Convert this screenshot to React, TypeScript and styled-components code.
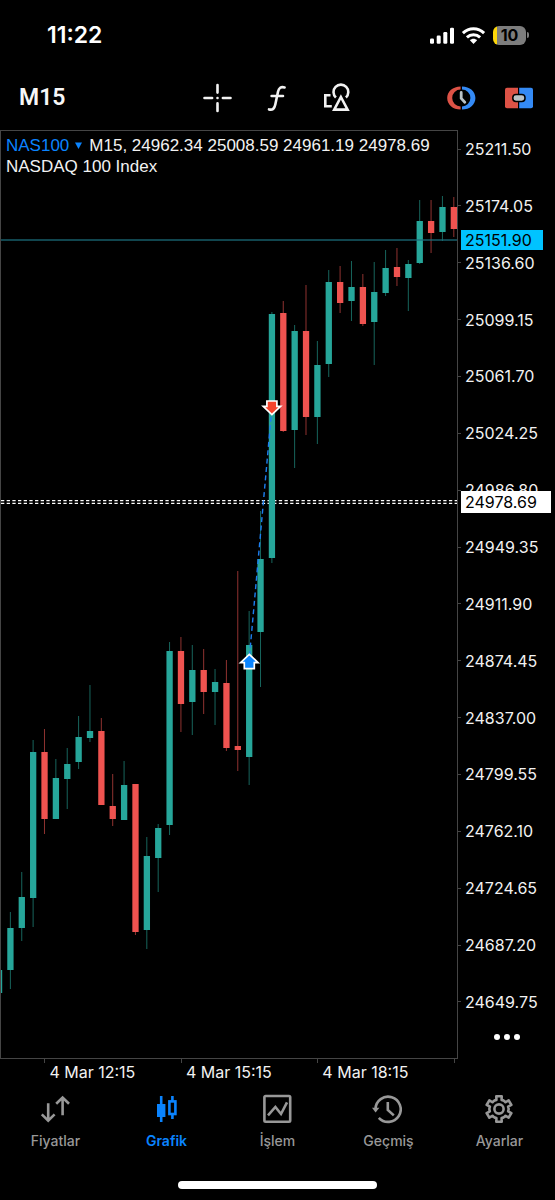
import React from "react";
import styled, { createGlobalStyle } from "styled-components";

const GlobalStyle = createGlobalStyle`
  *, *::before, *::after { box-sizing: border-box; }
  body { margin: 0; background: #000; color: #f2f2f2; font-family: Inter, "Liberation Sans", sans-serif; }
  button { padding: 0; border: 0; background: none; color: inherit; font: inherit; cursor: pointer; }
  svg { display: block; overflow: visible; }
`;

const UP = "#26a69a";
const DOWN = "#ef5350";
const FRAME = "#454545";

const Screen = styled.div`
  display: flex;
  flex-direction: column;
  min-height: 100vh;
  background: #000;
`;

const StatusBar = styled.header`
  display: flex;
  align-items: center;
  justify-content: space-between;
  height: 70px;
  padding: 0 26px 0 47px;
`;

const Clock = styled.time`
  font-size: 23px;
  line-height: 28px;
  font-weight: 600;
  color: #fff;
`;

const StatusIcons = styled.div`
  display: flex;
  align-items: center;
  gap: 8px;
`;

const Battery = styled.div`
  display: flex;
  align-items: center;
  gap: 1px;
  &::after {
    content: "";
    width: 2px;
    height: 6px;
    border-radius: 0 2px 2px 0;
    background: #7d7d7d;
  }
`;

const BatteryBody = styled.span`
  width: 33px;
  height: 19px;
  border-radius: 6px;
  background: linear-gradient(90deg, #fdd70a 4px, #7d7d7d 4px);
  color: #000;
  font-size: 16px;
  line-height: 19px;
  font-weight: 700;
  text-align: center;
`;

const Toolbar = styled.div`
  display: flex;
  align-items: center;
  height: 60px;
  padding: 0 21px 4px 19px;
`;

const ToolGroup = styled.div<{ $side?: "start" | "end" }>`
  display: flex;
  align-items: center;
  gap: ${(p) => (p.$side === "end" ? 28 : 30)}px;
  flex: ${(p) => (p.$side ? "1 1 0" : "none")};
  justify-content: ${(p) => (p.$side === "end" ? "flex-end" : "flex-start")};
`;

const Timeframe = styled.button`
  font-family: Roboto, sans-serif;
  font-size: 23px;
  line-height: 28px;
  font-weight: 600;
  color: #f7f7f7;
`;

const IconButton = styled.button`
  width: 30px;
  height: 30px;
`;

const ChartArea = styled.main`
  display: grid;
  grid-template-columns: minmax(0, 1fr) 97px;
`;

const Plot = styled.section`
  position: relative;
  border: 1px solid ${FRAME};
  & > svg {
    width: 100%;
    height: auto;
  }
`;

const Legend = styled.div`
  position: absolute;
  top: 4px;
  left: 5px;
  font-family: "Liberation Sans", Arial, sans-serif;
  font-size: 17px;
  line-height: 21px;
  white-space: nowrap;
`;

const LegendLine = styled.p`
  display: flex;
  align-items: center;
  gap: 7px;
  margin: 0;
`;

const SymbolButton = styled.button`
  display: flex;
  align-items: center;
  gap: 6px;
  color: #0a84ff;
`;

const PriceAxis = styled.aside`
  position: relative;
  display: flex;
  flex-direction: column;
  padding-top: 7px;
  font-size: 16px;
  line-height: 24px;
`;

const PriceScale = styled.ol`
  flex: 1;
  display: flex;
  flex-direction: column;
  justify-content: space-between;
  margin: 0;
  padding: 0;
  list-style: none;
`;

const PriceTick = styled.li`
  display: flex;
  align-items: center;
  gap: 4px;
  &::before {
    content: "";
    width: 3px;
    height: 1px;
    background: ${FRAME};
  }
`;

const PriceTag = styled.output<{ $tone: "ask" | "last" }>`
  position: absolute;
  left: 3px;
  transform: translateY(-50%);
  min-width: ${(p) => (p.$tone === "ask" ? 82 : 90)}px;
  padding: 0 4px;
  line-height: ${(p) => (p.$tone === "ask" ? 20 : 22)}px;
  background: ${(p) => (p.$tone === "ask" ? "#00c3ff" : "#fff")};
  color: #000;
`;

const MoreButton = styled.button`
  display: flex;
  align-items: center;
  justify-content: center;
  align-self: center;
  gap: 4px;
  width: 48px;
  height: 45px;
`;

const Dot = styled.span`
  width: 6px;
  height: 6px;
  border-radius: 50%;
  background: #fff;
`;

const TimeAxis = styled.ol`
  display: flex;
  width: calc(100% - 97px);
  height: 25px;
  margin: 0;
  padding: 0 0 0 8%;
  list-style: none;
  font-size: 16px;
  line-height: 18px;
`;

const TimeTick = styled.li`
  flex: 0 0 33%;
  white-space: nowrap;
  &::before {
    content: "";
    display: block;
    width: 1px;
    height: 4px;
    background: ${FRAME};
  }
  &:last-child { flex: 0 0 4px; }
`;

const TimeLabel = styled.span`
  display: block;
  padding-left: 5px;
`;

const TabBar = styled.nav`
  display: grid;
  grid-template-columns: repeat(5, 1fr);
  padding-top: 10px;
`;

const Tab = styled.a<{ $active?: boolean }>`
  display: flex;
  flex-direction: column;
  align-items: center;
  gap: 7px;
  color: ${(p) => (p.$active ? "#0a84ff" : "#989898")};
  font-size: 14px;
  line-height: 20px;
  font-weight: ${(p) => (p.$active ? 600 : 500)};
  text-decoration: none;
`;

const HomeIndicator = styled.div`
  width: 36%;
  height: 8px;
  margin: 30px auto 11px;
  border-radius: 4px;
  background: #fff;
`;

// [high, body top, body bottom, low, falling] for each quarter of an hour
type Candle = [number, number, number, number, boolean?];
const candles: Candle[] = [
  [970, 970, 993, 993],
  [912, 928, 970, 989],
  [872, 897, 928, 941],
  [740, 752, 898, 927],
  [729, 752, 819, 834, true],
  [759, 778, 819, 819],
  [748, 764, 779, 809],
  [716, 737, 762, 769],
  [685, 731, 738, 742],
  [718, 731, 805, 805, true],
  [774, 806, 819, 826, true],
  [761, 785, 820, 820],
  [784, 784, 932, 935, true],
  [837, 856, 930, 949],
  [824, 828, 858, 892],
  [642, 651, 825, 835],
  [637, 651, 704, 732, true],
  [645, 670, 702, 735],
  [649, 670, 692, 714, true],
  [669, 682, 692, 725],
  [660, 683, 748, 751, true],
  [571, 746, 750, 771, true],
  [611, 645, 757, 785],
  [511, 559, 632, 687],
  [312, 314, 558, 563],
  [301, 313, 431, 432, true],
  [325, 331, 430, 468],
  [285, 331, 417, 435, true],
  [341, 365, 417, 444],
  [270, 282, 364, 377],
  [266, 282, 303, 313, true],
  [261, 287, 301, 321],
  [274, 287, 324, 326, true],
  [262, 292, 322, 365],
  [250, 268, 293, 296],
  [248, 267, 277, 286, true],
  [260, 264, 278, 311],
  [200, 221, 263, 264],
  [200, 221, 233, 253, true],
  [196, 207, 232, 241],
  [197, 207, 229, 237, true],
];

const prices = [
  "25211.50", "25174.05", "25136.60", "25099.15", "25061.70", "25024.25", "24986.80", "24949.35",
  "24911.90", "24874.45", "24837.00", "24799.55", "24762.10", "24724.65", "24687.20", "24649.75",
];
const times = ["4 Mar 12:15", "4 Mar 15:15", "4 Mar 18:15"];

const STEP = 11.37;

function CandleChart() {
  return (
    <svg viewBox="1 131 456 927" role="img" aria-label="NAS100 M15" style={{ overflow: "hidden" }}>
      <g stroke="#fff" strokeWidth="1.4" strokeDasharray="3.3 2.37">
        <path d="M1 500.6H457" />
        <path d="M1 503.4H457" />
      </g>
      {candles.map(([high, top, bottom, low, falling], i) => {
        const x = -1 + i * STEP;
        const color = falling ? DOWN : UP;
        return (
          <g key={i} fill={color}>
            <rect x={x - 0.5} y={high} width="1" height={low - high} opacity="0.6" />
            <rect x={x - 3.1} y={top} width="6.3" height={bottom - top} />
          </g>
        );
      })}
      <path d="M1 240H457" stroke="#1b6f7c" strokeWidth="1.3" opacity="0.85" />
      <path d="M249.5 656L271.5 412" stroke="#1c7ff0" strokeWidth="1.4" strokeDasharray="5 3.4" />
      <g stroke="#fff" strokeWidth="1.7">
        <path d="M249.3 654.3L258 662.6H254.3V668.7H244.3V662.6H240.6Z" fill="#0a84ff" />
        <path d="M271.9 414.6L280.6 406.3H276.9V401H266.9V406.3H263.2Z" fill="#f5432c" />
      </g>
    </svg>
  );
}

const SignalIcon = () => (
  <svg width="24" height="17" viewBox="0 0 24 17" fill="#fff">
    <rect x="0" y="11.5" width="4" height="5.2" rx="1.2" />
    <rect x="6.7" y="8.6" width="4" height="8.1" rx="1.2" />
    <rect x="13.3" y="5" width="4" height="11.7" rx="1.2" />
    <rect x="20" y="0.7" width="4" height="16" rx="1.2" />
  </svg>
);

const WifiIcon = () => (
  <svg width="23" height="17" viewBox="0.5 0 23 17" fill="none" stroke="#fff" strokeWidth="3">
    <path d="M1.4 6.2C7.4 0.4 16.6 0.4 22.6 6.2" />
    <path d="M5.4 10.4C9.2 6.8 14.8 6.8 18.6 10.4" />
    <path d="M8.4 13.3C10.5 11.3 13.5 11.3 15.6 13.3L12 16.9Z" fill="#fff" stroke="none" />
  </svg>
);

const CrosshairIcon = () => (
  <svg width="30" height="30" viewBox="0 0 30 30" stroke="#f2f2f2" strokeWidth="2.6" strokeLinecap="round">
    <path d="M15.5 2V9.6M15.5 20.4V28M2.5 15H10.1M20.9 15H28.5M15.5 15V15.01" />
  </svg>
);

const FunctionIcon = () => (
  <svg width="30" height="30" viewBox="0 0 30 30" fill="none" stroke="#f2f2f2" strokeWidth="2.6" strokeLinecap="round">
    <path d="M22.6 4.4C18.9 3.4 16.8 5 16 8.8L13.3 21.6C12.5 25.6 10.6 27.4 7 26.4M9.6 13H21" />
  </svg>
);

const ShapesIcon = () => (
  <svg width="30" height="30" viewBox="0 0 30 30" fill="none" stroke="#f2f2f2" strokeWidth="2.6">
    <path d="M8.5 12.2H3.3V23.3H9.8" />
    <path d="M13.9 14.5A7.4 7.4 0 1 1 23.9 14.5" />
    <path d="M18.9 14L25.6 26.6H12.2Z" />
  </svg>
);

const TradeClockIcon = () => (
  <svg width="30" height="30" viewBox="0 0 30 30">
    <path d="M14.6 3.4C6.8 3.4 1.2 8.4 1.2 15S6.8 26.6 14.6 26.6V23.4A8.4 8.4 0 0 1 14.6 6.6Z" fill="#dd5246" />
    <path d="M16 3.4C23.8 3.4 29.4 8.4 29.4 15S23.8 26.6 16 26.6V23.4A8.4 8.4 0 0 0 16 6.6Z" fill="#348af5" />
    <path d="M15.2 9.4V15.4L18.8 19.2" fill="none" stroke="#b9c2c6" strokeWidth="2.8" strokeLinecap="round" strokeLinejoin="round" />
  </svg>
);

const OneClickIcon = () => (
  <svg width="30" height="30" viewBox="0 0 30 30">
    <path d="M14 4.8H3A2 2 0 0 0 1 6.8V23.2A2 2 0 0 0 3 25.2H14Z" fill="#dd5246" />
    <path d="M15.2 4.8H27A2 2 0 0 1 29 6.8V23.2A2 2 0 0 1 27 25.2H15.2Z" fill="#348af5" />
    <rect x="8.8" y="11.5" width="12.2" height="7" rx="3.2" fill="#b9c2c6" stroke="#000" strokeWidth="1.5" />
  </svg>
);

const gearOutline = Array.from({ length: 6 }, (_, tooth) =>
  [[-26, 9.6], [-16, 9.4], [-12, 13], [12, 13], [16, 9.4], [26, 9.6]].map(([offset, radius]) => {
    const angle = ((tooth * 60 - 90 + offset) * Math.PI) / 180;
    return `${(15 + radius * Math.cos(angle)).toFixed(2)},${(15 + radius * Math.sin(angle)).toFixed(2)}`;
  }).join(" ")
).join(" ");

const TabIcon = ({ children }: { children: React.ReactNode }) => (
  <svg width="30" height="30" viewBox="0 0 30 30" fill="none" stroke="currentColor" strokeWidth="2.6">
    {children}
  </svg>
);

const tabs = [
  {
    label: "Fiyatlar",
    icon: <path d="M7.2 9.3V26.6M0.8 20.4L7.2 26.6L13.6 20.4M21.6 21.3V3.6M15.2 9.8L21.6 3.6L28 9.8" />,
  },
  {
    label: "Grafik",
    icon: (
      <g>
        <rect x="5" y="10" width="8.4" height="13" fill="currentColor" stroke="none" />
        <path d="M9.2 2V28M20.4 2V7M20.4 20.5V25" />
        <rect x="17.4" y="7.4" width="6" height="12.6" />
      </g>
    ),
  },
  {
    label: "İşlem",
    icon: (
      <g>
        <rect x="1.4" y="2" width="25.8" height="25.8" rx="1.2" />
        <path d="M5 21.4L12.4 13L18 20L24 8.4" />
      </g>
    ),
  },
  {
    label: "Geçmiş",
    icon: (
      <g>
        <path d="M1.5 15A12.6 12.6 0 1 1 4.8 23.8" />
        <path d="M-2 13.8H5.4L1.6 18.4Z" fill="currentColor" stroke="none" />
        <path d="M13.8 8V16L19.8 21.4" />
      </g>
    ),
  },
  {
    label: "Ayarlar",
    icon: (
      <g transform="translate(-1 0)">
        <polygon points={gearOutline} strokeLinejoin="round" />
        <circle cx="15" cy="15" r="4.6" />
      </g>
    ),
  },
];

export default function App() {
  return (
    <Screen>
      <GlobalStyle />
      <StatusBar>
        <Clock>11:22</Clock>
        <StatusIcons>
          <SignalIcon />
          <WifiIcon />
          <Battery>
            <BatteryBody>10</BatteryBody>
          </Battery>
        </StatusIcons>
      </StatusBar>

      <Toolbar>
        <ToolGroup $side="start">
          <Timeframe>M15</Timeframe>
        </ToolGroup>
        <ToolGroup>
          <IconButton aria-label="Crosshair"><CrosshairIcon /></IconButton>
          <IconButton aria-label="Indicators"><FunctionIcon /></IconButton>
          <IconButton aria-label="Objects"><ShapesIcon /></IconButton>
        </ToolGroup>
        <ToolGroup $side="end">
          <IconButton aria-label="Order"><TradeClockIcon /></IconButton>
          <IconButton aria-label="One click trading"><OneClickIcon /></IconButton>
        </ToolGroup>
      </Toolbar>

      <ChartArea>
        <Plot>
          <CandleChart />
          <Legend>
            <LegendLine>
              <SymbolButton>
                NAS100
                <svg width="7" height="7" viewBox="0 0 7 7" fill="currentColor"><path d="M0 0.5H7L3.5 7Z" /></svg>
              </SymbolButton>
              <span>M15, 24962.34 25008.59 24961.19 24978.69</span>
            </LegendLine>
            <LegendLine>NASDAQ 100 Index</LegendLine>
          </Legend>
        </Plot>
        <PriceAxis>
          <PriceScale>
            {prices.map((price) => (
              <PriceTick key={price}>{price}</PriceTick>
            ))}
          </PriceScale>
          <PriceTag $tone="ask" style={{ top: `${((240 - 130) / 929) * 100}%` }}>25151.90</PriceTag>
          <PriceTag $tone="last" style={{ top: `${((502 - 130) / 929) * 100}%` }}>24978.69</PriceTag>
          <MoreButton aria-label="More">
            <Dot />
            <Dot />
            <Dot />
          </MoreButton>
        </PriceAxis>
      </ChartArea>

      <TimeAxis>
        {times.map((time) => (
          <TimeTick key={time}>
            <TimeLabel>{time}</TimeLabel>
          </TimeTick>
        ))}
        <TimeTick />
      </TimeAxis>

      <TabBar>
        {tabs.map(({ label, icon }) => (
          <Tab key={label} href={`#${label}`} $active={label === "Grafik"}>
            <TabIcon>{icon}</TabIcon>
            {label}
          </Tab>
        ))}
      </TabBar>
      <HomeIndicator />
    </Screen>
  );
}
